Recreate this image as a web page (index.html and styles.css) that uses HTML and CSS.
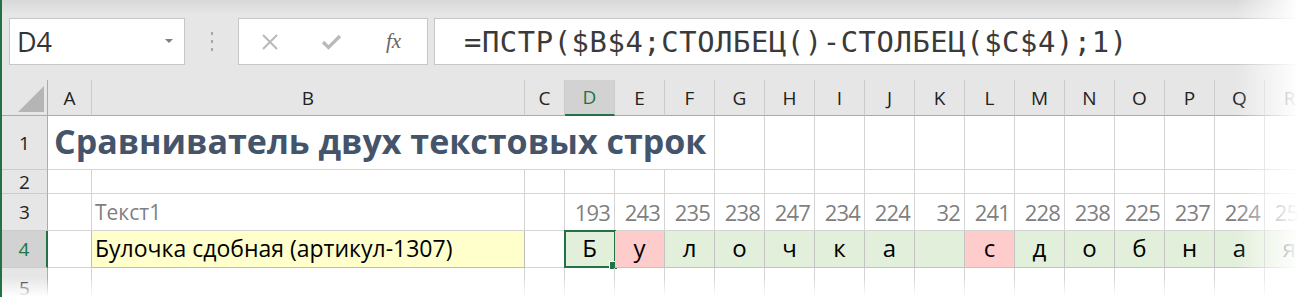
FILE: index.html
```html
<!DOCTYPE html>
<html lang="ru">
<head>
  <meta charset="UTF-8" />
  <title>Сравниватель двух текстовых строк</title>
  <link rel="stylesheet" href="styles.css">
</head>
<body>
  <div class="window">
    <div class="formula-bar">
      <div class="name-box">
        <span>D4</span>
        <svg class="drop" width="8" height="5" viewBox="0 0 8 5"><polygon points="0,0 8,0 4,4" fill="#7f7f7f"/></svg>
      </div>
      <div class="grip"><i></i><i></i><i></i></div>
      <div class="fx-buttons">
        <svg class="btn-cancel" width="18" height="16" viewBox="0 0 18 16"><path d="M2 1 L16 15 M16 1 L2 15" stroke="#b9b9b9" stroke-width="2" fill="none"/></svg>
        <svg class="btn-enter" width="21" height="16" viewBox="0 0 21 16"><path d="M2 8 L7.5 13.5 L19 2" stroke="#b9b9b9" stroke-width="3.2" fill="none"/></svg>
        <span class="fx">fx</span>
      </div>
      <div class="formula">=ПСТР($B$4;СТОЛБЕЦ()-СТОЛБЕЦ($C$4);1)</div>
    </div>

    <div class="sheet">
      <!-- заголовки столбцов -->
      <div class="c corner"><svg width="26" height="26" viewBox="0 0 26 26"><polygon points="26,0 26,26 0,26" fill="#b5b5b5"/></svg></div>
      <div class="c ch">A</div>
      <div class="c ch">B</div>
      <div class="c ch">C</div>
      <div class="c ch active">D</div>
      <div class="c ch">E</div>
      <div class="c ch">F</div>
      <div class="c ch">G</div>
      <div class="c ch">H</div>
      <div class="c ch">I</div>
      <div class="c ch">J</div>
      <div class="c ch">K</div>
      <div class="c ch">L</div>
      <div class="c ch">M</div>
      <div class="c ch">N</div>
      <div class="c ch">O</div>
      <div class="c ch">P</div>
      <div class="c ch">Q</div>
      <div class="c ch">R</div>

      <!-- строка 1 -->
      <div class="c rh">1</div>
      <div class="c title">Сравниватель двух текстовых строк</div>
      <div class="c"></div><div class="c"></div><div class="c"></div><div class="c"></div>
      <div class="c"></div><div class="c"></div><div class="c"></div><div class="c"></div>
      <div class="c"></div><div class="c"></div><div class="c"></div><div class="c"></div>

      <!-- строка 2 -->
      <div class="c rh">2</div>
      <div class="c"></div><div class="c"></div><div class="c"></div><div class="c"></div>
      <div class="c"></div><div class="c"></div><div class="c"></div><div class="c"></div>
      <div class="c"></div><div class="c"></div><div class="c"></div><div class="c"></div>
      <div class="c"></div><div class="c"></div><div class="c"></div><div class="c"></div>
      <div class="c"></div><div class="c"></div>

      <!-- строка 3 -->
      <div class="c rh">3</div>
      <div class="c"></div>
      <div class="c label">Текст1</div>
      <div class="c"></div>
      <div class="c num">193</div>
      <div class="c num">243</div>
      <div class="c num">235</div>
      <div class="c num">238</div>
      <div class="c num">247</div>
      <div class="c num">234</div>
      <div class="c num">224</div>
      <div class="c num">32</div>
      <div class="c num">241</div>
      <div class="c num">228</div>
      <div class="c num">238</div>
      <div class="c num">225</div>
      <div class="c num">237</div>
      <div class="c num">224</div>
      <div class="c num">255</div>

      <!-- строка 4 -->
      <div class="c rh active">4</div>
      <div class="c edge"></div>
      <div class="c source">Булочка сдобная (артикул-1307)</div>
      <div class="c edge"></div>
      <div class="c ch-ok selected">Б</div>
      <div class="c ch-bad">у</div>
      <div class="c ch-ok">л</div>
      <div class="c ch-ok">о</div>
      <div class="c ch-ok">ч</div>
      <div class="c ch-ok">к</div>
      <div class="c ch-ok">а</div>
      <div class="c ch-ok"></div>
      <div class="c ch-bad">с</div>
      <div class="c ch-ok">д</div>
      <div class="c ch-ok">о</div>
      <div class="c ch-ok">б</div>
      <div class="c ch-ok">н</div>
      <div class="c ch-ok">а</div>
      <div class="c ch-ok">я</div>

      <!-- строка 5 -->
      <div class="c rh">5</div>
      <div class="c"></div><div class="c"></div><div class="c"></div><div class="c"></div>
      <div class="c"></div><div class="c"></div><div class="c"></div><div class="c"></div>
      <div class="c"></div><div class="c"></div><div class="c"></div><div class="c"></div>
      <div class="c"></div><div class="c"></div><div class="c"></div><div class="c"></div>
      <div class="c"></div><div class="c"></div>
    </div>

    <div class="fade-right"></div>
    <div class="fade-bottom"></div>
  </div>
</body>
</html>
```

FILE: styles.css
```css
body {
  margin: 0;
  background: #fff;
  font-family: 'Open Sans', sans-serif;
  overflow: hidden;
}
.window {
  position: relative;
  height: 297px;
  border-left: 2px solid #217346;
  overflow: hidden;
}

/* строка формул */
.formula-bar {
  display: flex;
  height: 80px;
  box-sizing: border-box;
  padding: 18px 0 15px 7px;
  background: linear-gradient(#d8d8d8, #e6e6e6 14px);
}
.name-box {
  width: 176px;
  box-sizing: border-box;
  background: white;
  border: 1px solid #c6c6c6;
  display: flex;
  align-items: center;
  justify-content: space-between;
  padding: 0 11px 0 7px;
  font-size: 27px;
  color: #333;
}
.grip {
  width: 53px;
  display: flex;
  flex-direction: column;
  align-items: center;
  justify-content: center;
  gap: 5px;
}
.grip i {
  display: block;
  width: 2px;
  height: 3px;
  background: #a6a6a6;
}
.fx-buttons {
  width: 190px;
  box-sizing: border-box;
  background: white;
  border: 1px solid #c6c6c6;
  display: flex;
  align-items: center;
  padding-left: 22px;
}
.btn-enter {
  margin-left: 42px;
}
.fx {
  margin-left: 44px;
  font-family: 'Liberation Serif', serif;
  font-style: italic;
  font-size: 21px;
  color: #666;
}
.formula {
  flex: 1;
  margin-left: 6px;
  background: white;
  border: 1px solid #c6c6c6;
  border-right: none;
  display: flex;
  align-items: center;
  padding-left: 29px;
  font-family: 'DejaVu Sans Mono', monospace;
  font-size: 28.8px;
  letter-spacing: 0.6px;
  color: #3a3a3a;
  white-space: nowrap;
}

/* лист */
.sheet {
  display: grid;
  grid-template-columns: 46px 44px 433px 40px repeat(15, 50px);
  grid-template-rows: 36px 54px 24px 37px 37px 40px;
}
.c {
  box-sizing: border-box;
  border-right: 1px solid #d4d4d4;
  border-bottom: 1px solid #d4d4d4;
  display: flex;
  align-items: flex-end;
  font-size: 23px;
  color: #000;
  white-space: nowrap;
  position: relative;
}
.corner {
  background: #e6e6e6;
  border-bottom: 1px solid #ababab;
  border-right: 1px solid #ababab;
  justify-content: flex-end;
  padding: 0 3px 3px 0;
}
.ch {
  background: #e6e6e6;
  border-right-color: #cbcbcb;
  border-bottom: 1px solid #ababab;
  justify-content: center;
  align-items: center;
  font-size: 19px;
  color: #222;
}
.ch.active {
  background: #d2d2d2;
  color: #217346;
  border-bottom: 2px solid #217346;
}
.rh {
  background: #e6e6e6;
  border-right: 1px solid #ababab;
  border-bottom-color: #cbcbcb;
  justify-content: center;
  align-items: center;
  font-size: 19px;
  color: #222;
}
.rh.active {
  background: #d2d2d2;
  color: #217346;
  border-right: 2px solid #217346;
}
.title {
  grid-column: span 6;
  font-weight: bold;
  font-size: 34px;
  color: #44546a;
  padding: 0 0 5px 6px;
}
.label {
  font-size: 21px;
  color: #808080;
  padding: 0 0 4px 3px;
}
.num {
  justify-content: flex-end;
  font-size: 22px;
  letter-spacing: -0.8px;
  color: #7f7f7f;
  padding: 0 4px 3px 0;
}
.source {
  background: #ffffcc;
  border-right-color: #bdbdbd;
  border-bottom-color: #bdbdbd;
  padding: 0 0 3px 3px;
}
.edge {
  border-right-color: #bdbdbd;
}
.ch-ok,
.ch-bad {
  justify-content: center;
  font-size: 24px;
  border-right-color: #c3c3c3;
  border-bottom-color: #c3c3c3;
  padding-bottom: 3px;
}
.ch-ok {
  background: #e2efda;
}
.ch-bad {
  background: #ffcccc;
}
.selected::before {
  content: '';
  position: absolute;
  top: -1px;
  left: -1px;
  right: -2px;
  bottom: -1px;
  border: 2px solid #217346;
}
.selected::after {
  content: '';
  position: absolute;
  right: -4px;
  bottom: -3px;
  width: 7px;
  height: 7px;
  background: #217346;
  border: 1px solid white;
}

/* затухание по краям снимка */
.fade-right {
  position: absolute;
  top: 0;
  right: 0;
  bottom: 0;
  width: 62px;
  background: linear-gradient(to right, rgba(255,255,255,0), rgba(255,255,255,0.97));
}
.fade-bottom {
  position: absolute;
  left: -2px;
  right: 0;
  bottom: 0;
  height: 20px;
  background: linear-gradient(rgba(255,255,255,0), #fff);
}
```
